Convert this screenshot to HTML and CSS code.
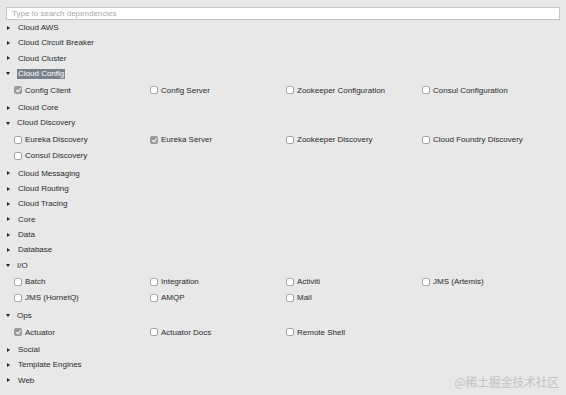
FILE: index.html
```html
<!DOCTYPE html>
<html lang="en">
<head>
    <meta charset="UTF-8">
    <title>Dependencies</title>
    <link rel="stylesheet" href="styles.css">
</head>
<body>
<div class="panel">
    <div class="search-wrap">
        <input class="search" type="text" placeholder="Type to search dependencies">
    </div>

    <div class="groups">
        <div class="group-head"><span class="arrow"></span>Cloud AWS</div>
        <div class="group-head"><span class="arrow"></span>Cloud Circuit Breaker</div>
        <div class="group-head"><span class="arrow"></span>Cloud Cluster</div>
        <div class="group-head open"><span class="arrow"></span><span class="selected">Cloud Config</span></div>
        <div class="deps">
            <label class="dep"><span class="box checked"></span>Config Client</label>
            <label class="dep"><span class="box"></span>Config Server</label>
            <label class="dep"><span class="box"></span>Zookeeper Configuration</label>
            <label class="dep"><span class="box"></span>Consul Configuration</label>
        </div>
        <div class="group-head"><span class="arrow"></span>Cloud Core</div>
        <div class="group-head open"><span class="arrow"></span>Cloud Discovery</div>
        <div class="deps">
            <label class="dep"><span class="box"></span>Eureka Discovery</label>
            <label class="dep"><span class="box checked"></span>Eureka Server</label>
            <label class="dep"><span class="box"></span>Zookeeper Discovery</label>
            <label class="dep"><span class="box"></span>Cloud Foundry Discovery</label>
            <label class="dep"><span class="box"></span>Consul Discovery</label>
        </div>
        <div class="group-head"><span class="arrow"></span>Cloud Messaging</div>
        <div class="group-head"><span class="arrow"></span>Cloud Routing</div>
        <div class="group-head"><span class="arrow"></span>Cloud Tracing</div>
        <div class="group-head"><span class="arrow"></span>Core</div>
        <div class="group-head"><span class="arrow"></span>Data</div>
        <div class="group-head"><span class="arrow"></span>Database</div>
        <div class="group-head open"><span class="arrow"></span>I/O</div>
        <div class="deps">
            <label class="dep"><span class="box"></span>Batch</label>
            <label class="dep"><span class="box"></span>Integration</label>
            <label class="dep"><span class="box"></span>Activiti</label>
            <label class="dep"><span class="box"></span>JMS (Artemis)</label>
            <label class="dep"><span class="box"></span>JMS (HornetQ)</label>
            <label class="dep"><span class="box"></span>AMQP</label>
            <label class="dep"><span class="box"></span>Mail</label>
        </div>
        <div class="group-head open"><span class="arrow"></span>Ops</div>
        <div class="deps">
            <label class="dep"><span class="box checked"></span>Actuator</label>
            <label class="dep"><span class="box"></span>Actuator Docs</label>
            <label class="dep"><span class="box"></span>Remote Shell</label>
        </div>
        <div class="group-head"><span class="arrow"></span>Social</div>
        <div class="group-head"><span class="arrow"></span>Template Engines</div>
        <div class="group-head"><span class="arrow"></span>Web</div>
    </div>
</div>

<div class="watermark">@稀土掘金技术社区</div>
</body>
</html>
```

FILE: styles.css
```css
body { margin: 0; background: #e8e8e8; font-family: "Liberation Sans", Arial, sans-serif; font-size: 8px; color: #2a2a2a; overflow: hidden; }
.panel { padding-top: 7px; }
.search-wrap { padding: 0 6px; }
.search { display: block; box-sizing: border-box; width: 554px; height: 13px; margin: 0; padding: 0 5px; border: 1px solid #c4c4c4; background: #fff; font-family: inherit; font-size: 8px; color: #333; outline: none; }
.search::placeholder { color: #a8a8a8; }
.groups { padding-top: 0; }
.group-head { height: 15.3px; line-height: 15.3px; padding-left: 7px; display: flex; align-items: center; white-space: nowrap; }
.arrow { width: 0; height: 0; margin-right: 8px; border-top: 2.5px solid transparent; border-bottom: 2.5px solid transparent; border-left: 3px solid #222; }
.group-head.open .arrow { margin-left: -1px; margin-right: 7px; border-left: 2.5px solid transparent; border-right: 2.5px solid transparent; border-top: 3px solid #222; border-bottom: 0; }
.selected { background: #7a808d; color: #fff; padding: 0 1px; line-height: 10px; }
.deps { display: grid; grid-template-columns: repeat(4, 136px); padding: 1px 0 2px 14px; }
.dep { height: 16px; display: flex; align-items: center; white-space: nowrap; }
.box { box-sizing: border-box; width: 8px; height: 8px; margin-right: 3px; border: 1px solid #a9a9a9; border-radius: 2px; background: #fff; position: relative; }
.box.checked { background: #9b9b9b; border-color: #9b9b9b; }
.box.checked::after { content: ""; position: absolute; left: 2px; top: 0; width: 2px; height: 4px; border: solid #fff; border-width: 0 1px 1px 0; transform: rotate(40deg); }
.watermark { position: absolute; right: 7px; bottom: 5px; font-family: "Noto Sans CJK SC", sans-serif; font-size: 12px; color: #c2c2c2; letter-spacing: -0.3px; }
```
